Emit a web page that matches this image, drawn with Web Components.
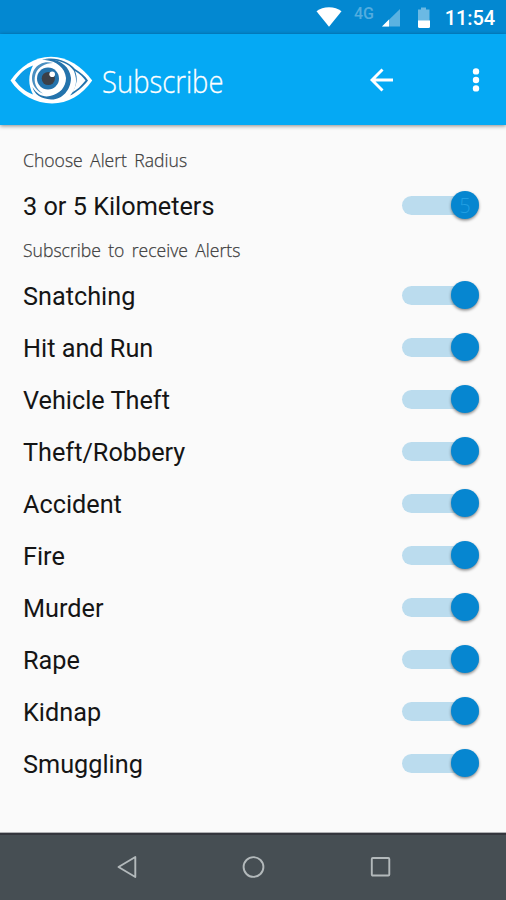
<!DOCTYPE html>
<html lang="en">
<head>
<meta charset="utf-8">
<title>Subscribe</title>
<style>
html, body { margin: 0; height: 100%; }
body { font-family: Roboto, sans-serif; background: #fafafa; overflow: hidden; }
</style>
</head>
<body>
<subscribe-screen></subscribe-screen>
<script>
const define = (name, html) => customElements.define(name, class extends HTMLElement {
  constructor() {
    super();
    this.attachShadow({ mode: 'open' }).innerHTML = html;
  }
});

define('status-bar', `
<style>
:host { display: flex; height: 34px; box-sizing: border-box; background: #0388d1; color: #fff; padding: 0 11px 0 316px; align-items: flex-start; }
svg { display: block; flex: none; }
.wifi { margin-top: 7px; }
.net { font: 500 16px/16px Roboto, sans-serif; color: #53addf; margin: 6px 0 0 12px; width: 22px; }
.cell { margin: 9px 0 0 6px; }
.batt { margin: 7px 0 0 16px; }
.time { font: 500 20px/24px Roboto, sans-serif; letter-spacing: -.1px; margin: 6px 0 0 auto; white-space: nowrap; }
</style>
<svg class="wifi" width="26" height="20"><path d="M.5 4.200C4 1.400 8 .2 13 .2s9 1.200 12.500 4L13 19.800Z" fill="#fff"/></svg>
<span class="net">4G</span>
<svg class="cell" width="19" height="18"><path d="M0 17.500L18 0v17.500Z" fill="#5bb2e1"/><path d="M0 17.500L7 10.500v7Z" fill="#fff"/></svg>
<svg class="batt" width="14" height="22"><path d="M1 2.500h3V.5h5v2h3.500V14H1Z" fill="#6bb9e4"/><path d="M1 13.500h12v6q0 1.500-1.500 1.500h-9Q1 21 1 19.500Z" fill="#fff"/></svg>
<span class="time">11:54</span>`);

define('eye-logo', `
<style>:host { display: block; width: 83px; height: 48px; } svg { display: block; }</style>
<svg width="83" height="48" viewBox="0 0 83 48">
  <path d="M.5 24.500C10 11 24 .8 41 .8S72 11 82.200 24.500C72 39 58 47.500 42 47.500S10 39 .5 24.500Z" fill="#fff"/>
  <path d="M5 24.500C10 17 15 12.500 23 9.500C18 19 18 29 23 38.500C15 35.500 10 31 5 24.500Z" fill="#0b9de8"/>
  <path d="M32 4C44 0 58 5 65 13C71 17 75 20 78 24.500C73 31 66 37 60 39.500C66 33 68 25 64 15C58 6 46 3 32 4Z" fill="#2473ac"/>
  <path d="M65 15C70 18 73 21 75.500 24.500C71 30 67 34 62 36.500C67 29 68 22 65 15Z" fill="#fff"/>
  <path d="M35 4C48 1 60 10 61 22C61 34 52 44 41 43.500C31 43 24 38 22.500 31C27 39 34 41.500 40 40C50 38 56 31 56 22C55 12 47 5 35 4Z" fill="#2473ac"/>
  <path d="M24 14C28 7 36 5 43 7C35 7 28 11 25.500 18C23 26 26 33 33 37.500C24 34 19 24 24 14Z" fill="#4a8fc0"/>
  <circle cx="38" cy="22.500" r="11" fill="#2473ac"/>
  <circle cx="38.300" cy="22.500" r="6.600" fill="#3c4048"/>
  <circle cx="42.200" cy="18.300" r="2.800" fill="#fff"/>
</svg>`);

define('app-bar', `
<style>
:host { display: flex; align-items: center; height: 91px; box-sizing: border-box; padding: 0 20px 0 10px; background: #05a9f4; color: #fff; box-shadow: 0 1px 4px rgba(0,0,0,.45); position: relative; }
h1 { margin: 3px 0 0 9px; font: 300 31.500px/44px "Open Sans", sans-serif; letter-spacing: 0; white-space: nowrap; width: 124px; transform: scaleX(.87); transform-origin: left; -webkit-text-stroke: .3px #fff; }
.back { margin-left: auto; }
.more { margin-left: 72px; }
svg { display: block; flex: none; }
</style>
<eye-logo></eye-logo>
<h1><slot></slot></h1>
<svg class="back" width="24" height="24"><path d="M23 12H2.500M12.500 1.500L2 12l10.500 10.500" fill="none" stroke="#fff" stroke-width="2.900"/></svg>
<svg class="more" width="20" height="24" fill="#fff"><circle cx="10" cy="3.400" r="3.200"/><circle cx="10" cy="12" r="3.200"/><circle cx="10" cy="20.400" r="3.200"/></svg>`);

define('toggle-switch', `
<style>
:host { display: flex; align-items: center; width: 77px; height: 28px; }
.track { flex: 1; height: 19px; border-radius: 10px; background: #bbdcee; display: flex; align-items: center; justify-content: flex-end; }
.thumb { width: 28px; height: 28px; border-radius: 50%; background: #0686d0; box-shadow: 0 1.500px 3px rgba(0,0,0,.45); color: #229fe2; font: 300 20px/29px "Open Sans", sans-serif; text-align: center; }
</style>
<div class="track"><div class="thumb"><slot></slot></div></div>`);

define('section-label', `
<style>
:host { display: block; height: 38px; font: 300 19px/36px "Open Sans", sans-serif; color: #3c3c3c; white-space: nowrap; word-spacing: 3px; transform: scaleX(.925); transform-origin: left; -webkit-text-stroke: .25px #3c3c3c; }
</style>
<slot></slot>`);

define('alert-row', `
<style>
:host { display: flex; align-items: center; justify-content: space-between; height: 52px; font: 400 25.250px/52px Roboto, sans-serif; color: #151515; white-space: nowrap; }
.name { padding-top: 2px; }
toggle-switch { margin-top: -2px; }
</style>
<span class="name"><slot></slot></span>
<toggle-switch><slot name="value"></slot></toggle-switch>`);

define('nav-bar', `
<style>
:host { display: flex; align-items: center; justify-content: space-between; height: 67px; box-sizing: border-box; padding: 0 114px 2px 116px; background: #464e53; border-top: 2px solid #34363d; box-shadow: 0 -1px 0 #b0b1b4; }
svg { display: block; fill: none; stroke: #b3b9bb; stroke-width: 1.900; stroke-linejoin: round; }
</style>
<svg width="22" height="24"><path d="M2.500 12L19.300 2v20Z"/></svg>
<svg width="24" height="24"><circle cx="11.500" cy="12" r="9.900"/></svg>
<svg width="22" height="24"><rect x="1.800" y="3" width="17.500" height="17.500" rx="1"/></svg>`);

define('subscribe-screen', `
<style>
:host { display: flex; flex-direction: column; height: 900px; width: 506px; }
main { flex: 1; padding: 17px 27px 0 23px; background: #fafafa; }
</style>
<status-bar></status-bar>
<app-bar>Subscribe</app-bar>
<main>
  <section-label>Choose Alert Radius</section-label>
  <alert-row>3 or 5 Kilometers<span slot="value">5</span></alert-row>
  <section-label>Subscribe to receive Alerts</section-label>
  ${['Snatching', 'Hit and Run', 'Vehicle Theft', 'Theft/Robbery', 'Accident', 'Fire', 'Murder', 'Rape', 'Kidnap', 'Smuggling']
    .map(name => `<alert-row>${name}</alert-row>`).join('')}
</main>
<nav-bar></nav-bar>`);
</script>
</body>
</html>
